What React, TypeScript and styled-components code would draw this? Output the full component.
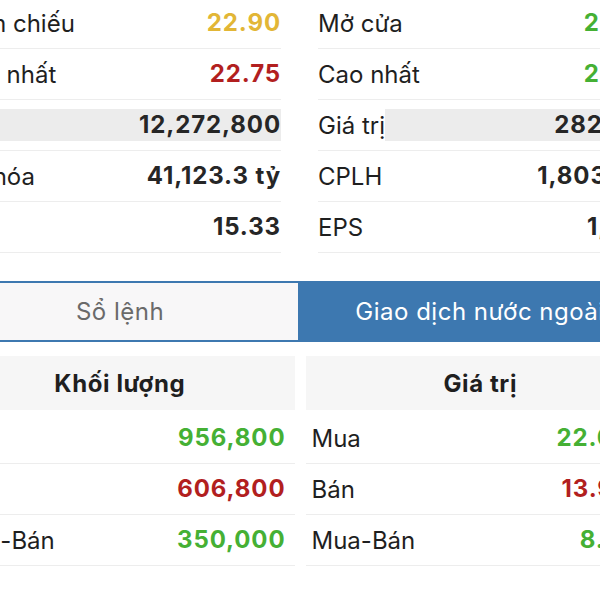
import { createGlobalStyle, styled } from "styled-components";

const GlobalStyle = createGlobalStyle`
  html, body {
    margin: 0;
    padding: 0;
    background: #ffffff;
    overflow: hidden;
  }
  body {
    font-family: Inter, "Noto Sans", "Liberation Sans", sans-serif;
    color: #222222;
  }
`;

type Tone = "ref" | "up" | "down" | "plain";

const toneColor: Record<Tone, string> = {
  ref: "#e2b636",
  up: "#45b034",
  down: "#b21f1f",
  plain: "#262626",
};

type Stat = { label: string; value: string; tone: Tone; flash?: boolean };

const leftStats: Stat[] = [
  { label: "Tham chiếu", value: "22.90", tone: "ref" },
  { label: "Thấp nhất", value: "22.75", tone: "down" },
  { label: "KL", value: "12,272,800", tone: "plain", flash: true },
  { label: "Vốn hóa", value: "41,123.3 tỷ", tone: "plain" },
  { label: "P/E", value: "15.33", tone: "plain" },
];

const rightStats: Stat[] = [
  { label: "Mở cửa", value: "22.90", tone: "up" },
  { label: "Cao nhất", value: "23.00", tone: "up" },
  { label: "Giá trị", value: "282.7 tỷ", tone: "plain", flash: true },
  { label: "CPLH", value: "1,803.3 tr", tone: "plain" },
  { label: "EPS", value: "1,494", tone: "plain" },
];

const volumeRows: Stat[] = [
  { label: "Mua", value: "956,800", tone: "up" },
  { label: "Bán", value: "606,800", tone: "down" },
  { label: "Mua-Bán", value: "350,000", tone: "up" },
];

const valueRows: Stat[] = [
  { label: "Mua", value: "22.0 tỷ", tone: "up" },
  { label: "Bán", value: "13.9 tỷ", tone: "down" },
  { label: "Mua-Bán", value: "8.1 tỷ", tone: "up" },
];

export default function App() {
  return (
    <>
      <GlobalStyle />
      <Page>
        <StatGrid>
          <StatColumn>
            {leftStats.map((s) => (
              <StatRow key={s.label}>
                <Label>{s.label}</Label>
                <Value $tone={s.tone} $flash={s.flash}>
                  {s.value}
                </Value>
              </StatRow>
            ))}
          </StatColumn>
          <StatColumn>
            {rightStats.map((s) => (
              <StatRow key={s.label}>
                <Label>{s.label}</Label>
                <Value $tone={s.tone} $flash={s.flash}>
                  {s.value}
                </Value>
              </StatRow>
            ))}
          </StatColumn>
        </StatGrid>

        <Tabs>
          <Tab>Sổ lệnh</Tab>
          <Tab $active>Giao dịch nước ngoài</Tab>
        </Tabs>

        <Tables>
          <Table>
            <TableHead>Khối lượng</TableHead>
            <TableBody>
              {volumeRows.map((r) => (
                <TableRow key={r.label}>
                  <Label>{r.label}</Label>
                  <Value $tone={r.tone}>{r.value}</Value>
                </TableRow>
              ))}
            </TableBody>
          </Table>
          <Table>
            <TableHead>Giá trị</TableHead>
            <TableBody>
              {valueRows.map((r) => (
                <TableRow key={r.label}>
                  <Label>{r.label}</Label>
                  <Value $tone={r.tone}>{r.value}</Value>
                </TableRow>
              ))}
            </TableBody>
          </Table>
        </Tables>
      </Page>
    </>
  );
}

const Page = styled.div`
  width: 720px;
  margin: -2px 0 0 -60px;
  font-size: 24px;
`;

const StatGrid = styled.div`
  display: grid;
  grid-template-columns: 339px 340px;
  column-gap: 37px;
  padding-left: 2px;
`;

const StatColumn = styled.div`
  display: flex;
  flex-direction: column;
`;

const StatRow = styled.div`
  display: flex;
  align-items: center;
  height: 51px;
  box-sizing: border-box;
  border-bottom: 1px solid #ededed;
`;

const Label = styled.span`
  font-weight: 400;
  color: #1f1f1f;
  white-space: nowrap;
`;

const Value = styled.span<{ $tone: Tone; $flash?: boolean }>`
  flex: 1;
  height: 32px;
  line-height: 32px;
  text-align: right;
  font-weight: 700;
  letter-spacing: 0.9px;
  white-space: nowrap;
  color: ${(p) => toneColor[p.$tone]};
  background: ${(p) => (p.$flash ? "#ececec" : "transparent")};
`;

const Tabs = styled.div`
  display: flex;
  margin-top: 28px;
  height: 61px;
`;

const Tab = styled.div<{ $active?: boolean }>`
  flex: 1;
  display: flex;
  align-items: center;
  justify-content: center;
  box-sizing: border-box;
  border: 2px solid #3d78b0;
  background: ${(p) => (p.$active ? "#3d78b0" : "#f8f7f8")};
  color: ${(p) => (p.$active ? "#ffffff" : "#6a6a6a")};
  font-size: 24px;
  letter-spacing: 0.5px;
`;

const Tables = styled.div`
  display: flex;
  gap: 11px;
  padding: 0 5px;
  margin-top: 14px;
`;

const Table = styled.div`
  flex: 1;
  display: flex;
  flex-direction: column;
`;

const TableHead = styled.div`
  height: 54px;
  display: flex;
  align-items: center;
  justify-content: center;
  background: #f6f6f6;
  font-weight: 700;
  letter-spacing: 0.6px;
  color: #1f1f1f;
`;

const TableBody = styled.div`
  margin-top: 3px;
  display: flex;
  flex-direction: column;
`;

const TableRow = styled.div`
  display: flex;
  align-items: center;
  height: 51px;
  box-sizing: border-box;
  padding: 0 9px 0 6px;
  border-bottom: 1px solid #ededed;
`;
